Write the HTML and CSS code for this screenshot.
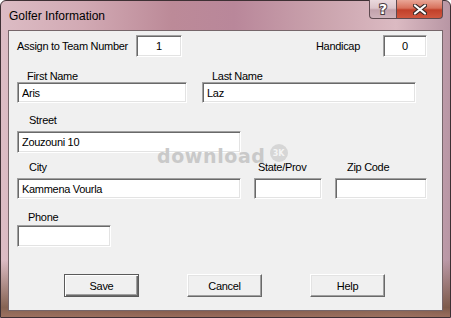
FILE: index.html
```html
<!DOCTYPE html>
<html lang="en">
<head>
  <meta charset="UTF-8">
  <title>Golfer Information</title>
  <link rel="stylesheet" href="styles.css">
</head>
<body>
  <div class="window">
    <!-- Pasek tytułu -->
    <div class="titlebar">
      <span class="title">Golfer Information</span>
      <div class="caption-btns">
        <div class="cap-btn help-btn">
          <svg width="14" height="16" viewBox="0 0 14 16">
            <text x="7" y="13" text-anchor="middle" class="help-glyph">?</text>
          </svg>
        </div>
        <div class="cap-btn close-btn">
          <svg width="14" height="11" viewBox="0 0 14 11">
            <path d="M2 1.5 L12 9.5 M12 1.5 L2 9.5" stroke="#3a2a28" stroke-width="4.2" stroke-linecap="round"/>
            <path d="M2 1.5 L12 9.5 M12 1.5 L2 9.5" stroke="#fff" stroke-width="2.2" stroke-linecap="round"/>
          </svg>
        </div>
      </div>
    </div>

    <!-- Formularz -->
    <div class="client">
      <div class="row row-team">
        <label class="lbl team-lbl">Assign to Team Number</label>
        <input class="field center w-team" type="text" value="1">
        <label class="lbl handicap-lbl">Handicap</label>
        <input class="field center w-handicap" type="text" value="0">
      </div>

      <div class="row row-names">
        <div class="group w-first">
          <label class="lbl ind-10">First Name</label>
          <input class="field" type="text" value="Aris">
        </div>
        <div class="group w-last gap-15">
          <label class="lbl ind-10">Last Name</label>
          <input class="field" type="text" value="Laz">
        </div>
      </div>

      <div class="row row-street">
        <div class="group w-city">
          <label class="lbl ind-12">Street</label>
          <input class="field tall" type="text" value="Zouzouni 10">
        </div>
      </div>

      <div class="row row-city">
        <div class="group w-city">
          <label class="lbl ind-12">City</label>
          <input class="field" type="text" value="Kammena Vourla">
        </div>
        <div class="group w-state gap-13">
          <label class="lbl ind-4">State/Prov</label>
          <input class="field" type="text" value="">
        </div>
        <div class="group w-zip gap-13">
          <label class="lbl ind-12">Zip Code</label>
          <input class="field" type="text" value="">
        </div>
      </div>

      <div class="row row-phone">
        <div class="group w-phone">
          <label class="lbl ind-11">Phone</label>
          <input class="field tall" type="text" value="">
        </div>
      </div>

      <div class="row row-buttons">
        <button class="btn default-btn">Save</button>
        <button class="btn">Cancel</button>
        <button class="btn">Help</button>
      </div>

      <!-- Znak wodny -->
      <div class="watermark">download<span class="wm-badge">3K</span></div>
    </div>
  </div>
</body>
</html>
```

FILE: styles.css
```css
body {
  margin: 0;
  width: 451px;
  height: 318px;
  overflow: hidden;
  font-family: "Liberation Sans", Arial, sans-serif;
}
.window {
  box-sizing: border-box;
  width: 451px;
  height: 318px;
  border: 1px solid #3e3034;
  border-radius: 6px 6px 0 0;
  padding: 0 7px 6px 7px;
  background:
    linear-gradient(to bottom, rgba(90, 55, 35, 0) 82%, rgba(105, 70, 45, 0.75) 97%, rgba(150, 105, 85, 0.9) 100%),
    linear-gradient(90deg, #dcbcc4 0%, #d2aab4 18%, #bc8a98 38%, #b9879a 52%, #cba4ae 72%, #dbbac2 88%, #b896a4 100%);
}
.titlebar {
  height: 29px;
  display: flex;
  align-items: flex-start;
}
.title {
  font-size: 12px;
  line-height: 14px;
  color: #000;
  margin-top: 8px;
  margin-left: 1px;
}
.caption-btns {
  margin-left: auto;
  display: flex;
  margin-top: -1px;
}
.cap-btn {
  box-sizing: border-box;
  height: 19px;
  display: flex;
  align-items: center;
  justify-content: center;
  border: 1px solid #5e4a50;
  border-top: none;
}
.help-btn {
  width: 27px;
  border-radius: 0 0 0 4px;
  border-right: none;
  background: linear-gradient(#ead9dd 0%, #dcc4ca 45%, #c2a2ac 55%, #cfb2ba 100%);
}
.help-glyph {
  font-family: "DejaVu Sans", sans-serif;
  font-weight: bold;
  font-size: 14px;
  fill: #fff;
  stroke: #4a3a3e;
  stroke-width: 2px;
  paint-order: stroke;
}
.close-btn {
  width: 47px;
  border-radius: 0 0 4px 0;
  background: linear-gradient(#e9a696 0%, #d8715c 45%, #c1402a 55%, #d0573f 100%);
}
.client {
  position: relative;
  box-sizing: border-box;
  height: 281px;
  background: #f0f0f0;
  border: 1px solid #76666a;
  font-size: 11px;
  letter-spacing: -0.3px;
  color: #000;
}
.row {
  display: flex;
  padding-left: 8px;
}
.row-team {
  align-items: center;
  margin-top: 4px;
}
.row-names { margin-top: 13px; }
.row-street { margin-top: 11px; }
.row-city { margin-top: 8px; }
.row-phone { margin-top: 12px; }
.row-buttons {
  margin-top: 27px;
  padding-left: 55px;
  gap: 48px;
}
.group {
  display: flex;
  flex-direction: column;
}
.lbl {
  display: block;
  line-height: 12px;
  white-space: nowrap;
}
.team-lbl { width: 119px; }
.handicap-lbl {
  margin-left: auto;
  margin-right: 23px;
}
.ind-4 { padding-left: 4px; }
.ind-10 { padding-left: 10px; }
.ind-11 { padding-left: 11px; }
.ind-12 { padding-left: 12px; }
.gap-13 { margin-left: 13px; }
.gap-15 { margin-left: 15px; }
.w-first { width: 170px; }
.w-last { width: 214px; }
.w-city { width: 224px; }
.w-state { width: 68px; }
.w-zip { width: 92px; }
.w-phone { width: 94px; }
.field {
  box-sizing: border-box;
  width: 100%;
  height: 21px;
  margin: 0;
  padding: 0 0 0 4px;
  background: #fff;
  border: 1px solid;
  border-color: #a0a0a0 #fff #fff #a0a0a0;
  box-shadow: inset 1px 1px #696969, inset -1px -1px #e3e3e3;
  font-family: "Liberation Sans", Arial, sans-serif;
  font-size: 11px;
  letter-spacing: -0.3px;
  color: #000;
  outline: none;
}
.row-city .field { margin-top: 5px; }
.row-street .field { margin-top: 5px; }
.row-phone .field { margin-top: 2px; }
.field.tall { height: 22px; }
.field.center {
  text-align: center;
  padding: 0;
  height: 22px;
}
.w-team { width: 46px; }
.w-handicap {
  width: 44px;
  margin-right: 15px;
}
.btn {
  box-sizing: border-box;
  width: 75px;
  height: 23px;
  margin: 0;
  padding: 0;
  background: #f0f0f0;
  border: 1px solid;
  border-color: #fff #696969 #696969 #fff;
  box-shadow: inset -1px -1px #a0a0a0, inset 1px 1px #e3e3e3;
  font-family: "Liberation Sans", Arial, sans-serif;
  font-size: 11px;
  letter-spacing: -0.3px;
  color: #000;
}
.default-btn {
  border: 1px solid #5a5a5a;
  box-shadow: inset 1px 1px #fff, inset -1px -1px #696969, inset -2px -2px #a0a0a0;
}
.watermark {
  position: absolute;
  left: 148px;
  top: 114px;
  font-family: "DejaVu Sans", sans-serif;
  font-weight: bold;
  font-size: 19px;
  letter-spacing: 0.6px;
  color: #c9c9c9;
  display: flex;
  align-items: center;
  pointer-events: none;
}
.wm-badge {
  width: 18px;
  height: 18px;
  margin-left: 4px;
  margin-top: -6px;
  border-radius: 50%;
  background: #d6d6d6;
  color: #f4f4f4;
  font-size: 8px;
  letter-spacing: 0;
  display: flex;
  align-items: center;
  justify-content: center;
}
```
